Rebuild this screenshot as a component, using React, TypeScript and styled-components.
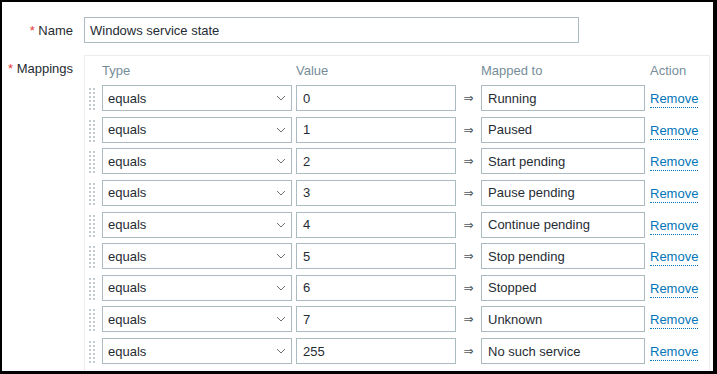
import styled, { createGlobalStyle } from "styled-components";

const GlobalStyle = createGlobalStyle`
    html, body {
        margin: 0;
        padding: 0;
        background: #000000;
    }
    body {
        font-family: "Liberation Sans", Arial, sans-serif;
        font-size: 13px;
        color: #1f2c33;
    }
`;

const mappings = [
    { value: "0", mapped: "Running" },
    { value: "1", mapped: "Paused" },
    { value: "2", mapped: "Start pending" },
    { value: "3", mapped: "Pause pending" },
    { value: "4", mapped: "Continue pending" },
    { value: "5", mapped: "Stop pending" },
    { value: "6", mapped: "Stopped" },
    { value: "7", mapped: "Unknown" },
    { value: "255", mapped: "No such service" },
];

const DragHandle = () => (
    <svg width="6" height="22" viewBox="0 0 6 22">
        {[0, 1, 2, 3, 4, 5].map((r) =>
            [0, 4].map((c) => (
                <rect key={`${r}-${c}`} x={c} y={r * 4} width="2" height="2" fill="#c2cbd0" />
            ))
        )}
    </svg>
);

const Chevron = () => (
    <svg width="10" height="6" viewBox="0 0 10 6">
        <polyline points="1,1 5,5 9,1" fill="none" stroke="#6b7175" strokeWidth="1" />
    </svg>
);

export default function App() {
    return (
        <Frame>
            <GlobalStyle />
            <Page>
                <Form>
                    <Label><Req>*</Req> Name</Label>
                    <NameInput defaultValue="Windows service state" />

                    <Label><Req>*</Req> Mappings</Label>
                    <Panel>
                        <HeaderRow>
                            <span />
                            <HeadCell>Type</HeadCell>
                            <HeadCell>Value</HeadCell>
                            <span />
                            <HeadCell>Mapped to</HeadCell>
                            <HeadCell>Action</HeadCell>
                        </HeaderRow>
                        <Rows>
                            {mappings.map((m) => (
                                <Row key={m.value}>
                                    <Handle><DragHandle /></Handle>
                                    <Select>
                                        <span>equals</span>
                                        <Chevron />
                                    </Select>
                                    <TextInput $width={160} defaultValue={m.value} />
                                    <Arrow>⇒</Arrow>
                                    <TextInput $width={164} defaultValue={m.mapped} />
                                    <RemoveCell>
                                        <RemoveLink>Remove</RemoveLink>
                                    </RemoveCell>
                                </Row>
                            ))}
                        </Rows>
                    </Panel>
                </Form>
            </Page>
        </Frame>
    );
}

const Frame = styled.div`
    width: 717px;
    height: 374px;
    box-sizing: border-box;
    padding: 2px 4px 3px 2px;
    background: #000000;
`
const Page = styled.div`
    width: 711px;
    height: 369px;
    background: #ffffff;
    overflow: hidden;
`
const Form = styled.div`
    display: grid;
    grid-template-columns: 71px auto;
    column-gap: 11px;
    row-gap: 12px;
    align-items: start;
    padding-top: 15px;
`
const Label = styled.div`
    text-align: right;
    padding-top: 5px;
    line-height: 18px;
    color: #1f2c33;
    white-space: nowrap;
`
const Req = styled.span`
    color: #e33734;
`
const NameInput = styled.input`
    box-sizing: border-box;
    width: 495px;
    height: 26px;
    margin: 0;
    padding: 0 5px;
    border: 1px solid #acbbc2;
    border-radius: 0;
    font: inherit;
    color: #1f2c33;
    outline: none;
`
const Panel = styled.div`
    box-sizing: border-box;
    width: 626px;
    border: 1px solid #ebeef0;
    padding: 5px 0 10px 0;
`
const Grid = styled.div`
    display: grid;
    grid-template-columns: 17px 194px 160px 25px 169px auto;
    align-items: center;
`
const HeaderRow = styled(Grid)`
    height: 24px;
    line-height: 20px;
    align-items: start;
`
const HeadCell = styled.div`
    color: #768d99;
`
const Rows = styled.div`
    display: flex;
    flex-direction: column;
    gap: 5.625px;
`
const Row = styled(Grid)`
    height: 26px;
`
const Handle = styled.div`
    display: flex;
    justify-content: flex-start;
    padding-left: 4px;
    padding-top: 2px;
`
const Select = styled.div`
    box-sizing: border-box;
    width: 190px;
    height: 26px;
    border: 1px solid #acbbc2;
    padding: 0 5px 0 5px;
    display: flex;
    align-items: center;
    justify-content: space-between;
    color: #1f2c33;
    background: #ffffff;
`
const TextInput = styled.input<{ $width: number }>`
    box-sizing: border-box;
    width: ${(p) => p.$width}px;
    height: 26px;
    margin: 0;
    padding: 0 6px;
    border: 1px solid #acbbc2;
    border-radius: 0;
    font: inherit;
    color: #1f2c33;
    outline: none;
`
const Arrow = styled.div`
    text-align: center;
    font-family: "DejaVu Sans", sans-serif;
    font-size: 12px;
    color: #4f5a60;
`
const RemoveCell = styled.div`
    display: flex;
    padding-top: 3px;
`
const RemoveLink = styled.span`
    color: #0275b8;
    border-bottom: 1px dotted #0275b8;
    line-height: 16px;
    cursor: pointer;
`
